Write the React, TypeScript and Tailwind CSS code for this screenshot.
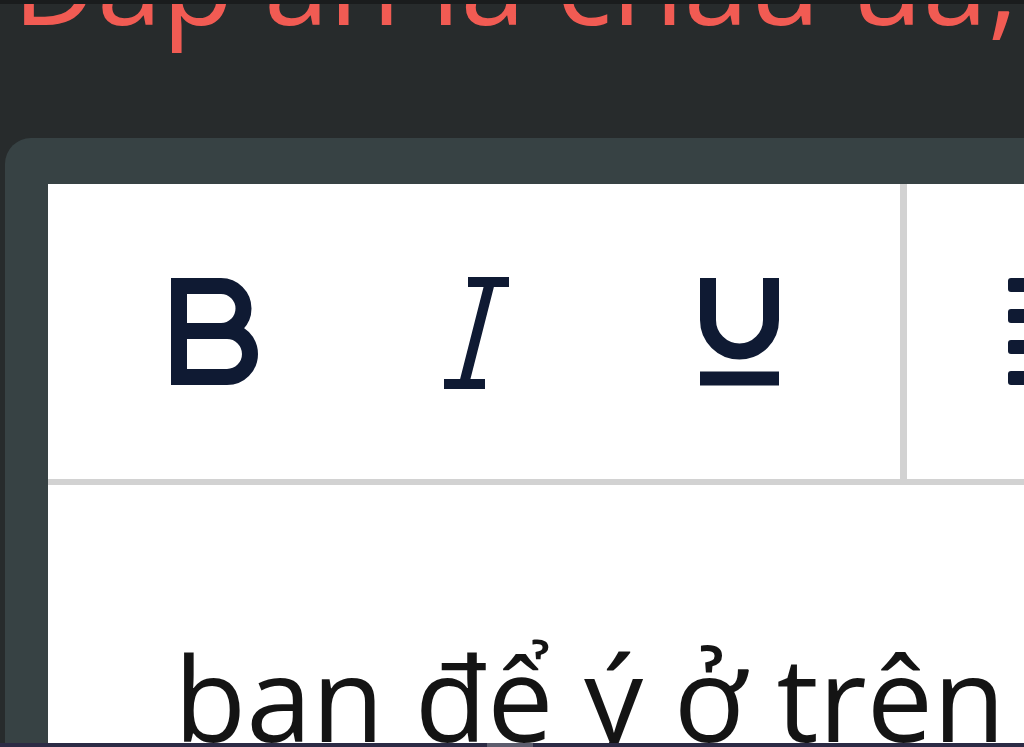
import React from "react";

const ink = "#0f1a33";

function BoldIcon() {
  return (
    <svg width="88" height="110" viewBox="0 0 88 110" fill="none">
      <path
        d="M8 9 H50 a22.5 22.5 0 0 1 0 45 H8 M8 54 H56 a23 23 0 0 1 0 46 H8 M8 1 V108"
        stroke={ink}
        strokeWidth="16"
        strokeLinejoin="round"
      />
    </svg>
  );
}

function ItalicIcon() {
  return (
    <svg width="70" height="116" viewBox="0 0 70 116" fill="none">
      <path d="M26 8 H67 M2 110 H43 M48 8 L22 110" stroke={ink} strokeWidth="10" />
    </svg>
  );
}

function UnderlineIcon() {
  return (
    <svg width="79" height="108" viewBox="0 0 79 108" fill="none">
      <path d="M8 0 V42 a31.5 31.5 0 0 0 63 0 V0" stroke={ink} strokeWidth="16" />
      <path d="M0 100.5 H79" stroke={ink} strokeWidth="14" />
    </svg>
  );
}

function ListIcon() {
  return (
    <div className="flex flex-col gap-[17px]">
      {[0, 1, 2, 3].map((i) => (
        <div key={i} className="h-[14px] w-[40px] rounded-[3px] bg-[#0f1a33]" />
      ))}
    </div>
  );
}

export default function App() {
  return (
    <div className="relative flex h-[747px] w-[1024px] flex-col overflow-hidden bg-[#272b2c] font-['Open_Sans',sans-serif]">
      {/* top edge of the page */}
      <div className="absolute inset-x-0 top-0 z-10 h-[4px] bg-[#1a1c1d]" />

      <div className="h-[138px] shrink-0 pl-[12px]">
        <p className="mt-[-79px] whitespace-nowrap text-[117px] leading-none text-[#f15b53]">
          Đáp án là châu úa,
        </p>
      </div>

      {/* editor card */}
      <div className="ml-[5px] flex min-h-0 flex-1 flex-col overflow-hidden rounded-tl-[26px] bg-[#374244] pl-[43px] pt-[46px]">
        <div className="flex min-h-0 flex-1 flex-col overflow-hidden bg-white">
          <div className="flex h-[301px] shrink-0 items-center border-b-[6px] border-[#d2d2d2] pl-[36px]">
            <div className="flex w-[262px] shrink-0 items-center justify-center">
              <BoldIcon />
            </div>
            <div className="flex w-[262px] shrink-0 items-center justify-center">
              <ItalicIcon />
            </div>
            <div className="flex w-[262px] shrink-0 items-center justify-center">
              <UnderlineIcon />
            </div>
            <div className="ml-[30px] w-[7px] shrink-0 self-stretch bg-[#d2d2d2]" />
            <div className="ml-[101px] shrink-0">
              <ListIcon />
            </div>
          </div>
          <div className="pl-[126px] pt-[153px]">
            <p className="whitespace-nowrap text-[118px] leading-none text-[#141414]">
              ban để ý ở trên
            </p>
          </div>
        </div>
      </div>

      {/* bottom edge */}
      <div className="flex h-[4px] shrink-0 bg-[#2c2b45]">
        <div className="ml-[487px] w-[46px] bg-[#5d5d6e]" />
      </div>
    </div>
  );
}
